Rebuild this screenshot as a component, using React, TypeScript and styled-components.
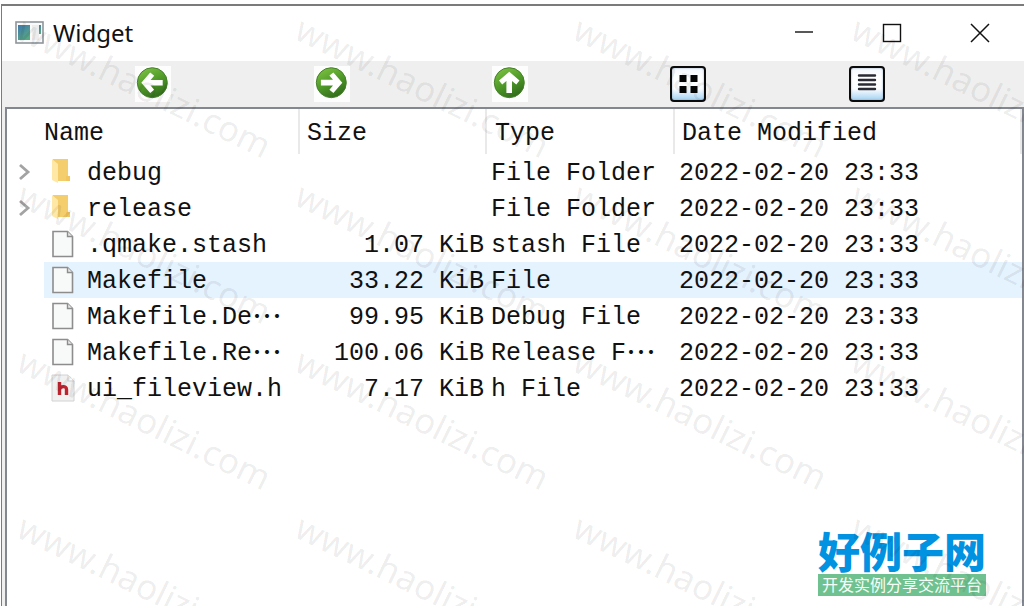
import React from "react";
import styled, { createGlobalStyle, css } from "styled-components";

const GlobalStyle = createGlobalStyle`
  *, *::before, *::after { box-sizing: border-box; }
  html, body, #root { height: 100%; }
  body {
    margin: 0;
    background: #ffffff;
    overflow: hidden;
  }
`;

const Page = styled.div`
  position: relative;
  display: flex;
  min-height: 100vh;
  padding: 4px 0 0 1px;
  overflow: hidden;
`;

const Window = styled.main`
  flex: 1;
  min-width: 0;
  display: flex;
  flex-direction: column;
  border: solid #7b7b7b;
  border-width: 2px 0 0 1px;
  background: #efefef;
`;

const TitleBar = styled.header`
  display: flex;
  align-items: center;
  height: 55px;
  padding: 0 0 2px 13px;
  background: #ffffff;
`;

const Title = styled.h1`
  flex: 1;
  margin: 0;
  padding-left: 9px;
  font: 400 24px/32px "Noto Sans", "Open Sans", sans-serif;
  color: #111111;
`;

const CaptionButton = styled.button`
  display: flex;
  align-items: center;
  justify-content: center;
  width: 88px;
  height: 100%;
  padding: 0;
  border: 0;
  background: transparent;
`;

const ToolBar = styled.nav`
  display: grid;
  grid-template-columns: repeat(5, 1fr);
  align-items: center;
  justify-items: center;
  height: 46px;
  padding: 0 68px 0 62px;
`;

const ToolButton = styled.button<{ $framed?: boolean }>`
  display: flex;
  align-items: center;
  justify-content: center;
  width: 36px;
  height: 36px;
  padding: 0;
  border: 0;
  background: #fdfdfd;
  ${(p) =>
    p.$framed &&
    css`
      border: 2px solid #0b0b0b;
      border-radius: 4px;
      background: linear-gradient(#f4f7fb, #ffffff 30%, #fbfdff 65%, #a5d3f3);
      box-shadow: inset 0 0 2px #8aa4bb;
    `}
`;

const FileView = styled.section`
  flex: 1;
  margin-left: 3px;
  border: solid #828790;
  border-width: 2px 2px 0 2px;
  background: #ffffff;
`;

const Tree = styled.table`
  width: 100%;
  table-layout: fixed;
  border-collapse: separate;
  border-spacing: 0;
  font: 400 25px/32px "Liberation Mono", "Noto Sans CJK SC", monospace;
  color: #111111;
`;

const Column = styled.col<{ $width?: number }>`
  width: ${(p) => (p.$width ? `${p.$width}px` : "auto")};
`;

const HeadCell = styled.th<{ $indent: number }>`
  height: 45px;
  padding: 5px 0 0 ${(p) => p.$indent}px;
  border-right: 2px solid #e9e9e9;
  font-weight: 400;
  text-align: left;
  white-space: nowrap;
`;

const Cell = styled.td<{ $right?: boolean }>`
  height: 36px;
  padding: 4px 3px 0 4px;
  text-align: ${(p) => (p.$right ? "right" : "left")};
  white-space: nowrap;
`;

const NameCell = styled(Cell)`
  padding: 0;
`;

const NameBox = styled.div`
  display: flex;
  height: 36px;
`;

const Branch = styled.span`
  display: flex;
  align-items: center;
  width: 37px;
  padding-left: 11px;
`;

const Expander = styled.button`
  display: flex;
  padding: 0;
  border: 0;
  background: transparent;
`;

const Item = styled.span`
  display: flex;
  flex: 1;
  align-items: center;
  gap: 12px;
  padding-left: 7px;
`;

const FileName = styled.span`
  padding-top: 4px;
`;

const Row = styled.tr<{ $selected?: boolean }>`
  ${(p) =>
    p.$selected &&
    css`
      ${Item}, ${Cell}:not(${NameCell}) {
        background: #e5f3ff;
      }
    `}
`;

const Ellipsis = styled.span`
  display: inline-block;
  height: 32px;
  vertical-align: top;
  font: 400 30px/24px "Noto Sans CJK SC", sans-serif;
`;

const Watermarks = styled.div`
  position: absolute;
  inset: 0;
  display: grid;
  grid-template-columns: repeat(4, 278px);
  grid-auto-rows: 166px;
  padding: 5px 0 0 15px;
  overflow: hidden;
  pointer-events: none;
  user-select: none;
`;

const Watermark = styled.span`
  font: 400 35px/40px "Noto Sans", "Open Sans", sans-serif;
  color: rgba(0, 0, 0, 0.08);
  white-space: nowrap;
  transform: rotate(26deg);
  transform-origin: 0 32px;
`;

const SiteLogo = styled.aside`
  position: absolute;
  right: 38px;
  bottom: 10px;
  display: flex;
  flex-direction: column;
  width: 168px;
`;

const SiteName = styled.strong`
  font: 900 42px/48px "Noto Sans CJK SC", sans-serif;
  color: #0292e2;
  white-space: nowrap;
`;

const SiteTagline = styled.span`
  height: 22px;
  padding: 0 4px;
  background: #70c190;
  font: 400 16px/20px "Noto Sans CJK SC", sans-serif;
  color: #f4fff8;
  text-align: center;
  white-space: nowrap;
`;

type Kind = "folder" | "file" | "header";

interface Entry {
  name: string;
  size: string;
  type: string;
  kind: Kind;
  nameCut?: boolean;
  typeCut?: boolean;
  selected?: boolean;
}

const modified = "2022-02-20 23:33";

const entries: Entry[] = [
  { name: "debug", size: "", type: "File Folder", kind: "folder" },
  { name: "release", size: "", type: "File Folder", kind: "folder" },
  { name: ".qmake.stash", size: "1.07 KiB", type: "stash File", kind: "file" },
  { name: "Makefile", size: "33.22 KiB", type: "File", kind: "file", selected: true },
  { name: "Makefile.De", size: "99.95 KiB", type: "Debug File", kind: "file", nameCut: true },
  { name: "Makefile.Re", size: "100.06 KiB", type: "Release F", kind: "file", nameCut: true, typeCut: true },
  { name: "ui_fileview.h", size: "7.17 KiB", type: "h File", kind: "header" },
];

const AppIcon = () => (
  <svg width="29" height="23" viewBox="0 0 29 23" aria-hidden="true">
    <defs>
      <linearGradient id="pane" x1="0" y1="0" x2="0.6" y2="1">
        <stop offset="0" stopColor="#3f78ad" />
        <stop offset="1" stopColor="#58a884" />
      </linearGradient>
    </defs>
    <rect x="1" y="1" width="27" height="21" fill="#fafafa" stroke="#8f959c" strokeWidth="1.6" />
    <rect x="3" y="4" width="12" height="15" fill="url(#pane)" />
    <rect x="17" y="4" width="7" height="15" fill="#ededed" />
    <rect x="24" y="4" width="2" height="9" fill="url(#pane)" />
  </svg>
);

const ArrowIcon = ({ turn }: { turn: number }) => (
  <svg width="36" height="36" viewBox="0 0 36 36" aria-hidden="true">
    <defs>
      <linearGradient id={`green${turn}`} x1="0.2" y1="0" x2="0.7" y2="1">
        <stop offset="0" stopColor="#7cc142" />
        <stop offset="0.5" stopColor="#4f9a28" />
        <stop offset="1" stopColor="#30691a" />
      </linearGradient>
    </defs>
    <circle cx="17.3" cy="16.7" r="15" fill={`url(#green${turn})`} stroke="#47802d" strokeWidth="1" />
    <g transform={`rotate(${turn} 17.3 16.7)`}>
      <path
        d="M6.3 16.7 L15.2 6.5 L19.2 9.7 L15.6 14 H27.7 V19.6 H15.6 L19.2 23.8 L15.2 27 Z"
        fill="#ffffff"
      />
    </g>
  </svg>
);

const GridIcon = () => (
  <svg width="32" height="32" viewBox="0 0 32 32" aria-hidden="true">
    <path d="M7.5 7h7v7h-7zM18.5 7h7v7h-7zM7.5 18h7v7h-7zM18.5 18h7v7h-7z" fill="#050505" />
  </svg>
);

const ListIcon = () => (
  <svg width="32" height="32" viewBox="0 0 32 32" aria-hidden="true">
    <path
      d="M8 7.5H24M8 12H24M8 16.5H24M8 21H24"
      stroke="#2b2b35"
      strokeWidth="2.4"
      strokeLinecap="round"
    />
  </svg>
);

const FolderIcon = () => (
  <svg width="24" height="28" viewBox="0 0 24 28" aria-hidden="true">
    <path d="M2 1H17V19H19V23H6L2 22Z" fill="#f4cd6c" />
    <path d="M15 18H19V23H15Z" fill="#f1c661" />
    <path d="M1 1L7 6V25L1 22Z" fill="#ffe8a6" />
  </svg>
);

const FileIcon = () => (
  <svg width="24" height="28" viewBox="0 0 24 28" aria-hidden="true">
    <path d="M2 1.5H16.5L21.5 6.5V26.5H2Z" fill="#f8f9f9" stroke="#8d8d8d" strokeWidth="1.6" />
    <path d="M16.5 1.5V6.5H21.5" fill="#e8e8e8" stroke="#8d8d8d" strokeWidth="1.4" />
  </svg>
);

const HeaderFileIcon = () => (
  <svg width="24" height="28" viewBox="0 0 24 28" aria-hidden="true">
    <path d="M1 1H17L23 7V27H1Z" fill="#f1f1f1" stroke="#d2d2d2" />
    <path d="M17 1V7H23" fill="#fafafa" stroke="#cfcfcf" />
    <path
      d="M8.5 8V21M8.5 15.5C9.5 11.8 15.5 11.5 15.5 15.5V21"
      fill="none"
      stroke="#bd2430"
      strokeWidth="3.4"
    />
  </svg>
);

const icons: Record<Kind, () => React.JSX.Element> = {
  folder: FolderIcon,
  file: FileIcon,
  header: HeaderFileIcon,
};

export default function App() {
  return (
    <Page>
      <GlobalStyle />
      <Window>
        <TitleBar>
          <AppIcon />
          <Title>Widget</Title>
          <CaptionButton aria-label="Minimize">
            <svg width="20" height="20" viewBox="0 0 20 20">
              <path d="M1 9H19" stroke="#111" strokeWidth="1.4" />
            </svg>
          </CaptionButton>
          <CaptionButton aria-label="Maximize">
            <svg width="20" height="20" viewBox="0 0 20 20">
              <rect x="1.5" y="1.5" width="17" height="17" fill="none" stroke="#111" strokeWidth="1.4" />
            </svg>
          </CaptionButton>
          <CaptionButton aria-label="Close">
            <svg width="20" height="20" viewBox="0 0 20 20">
              <path d="M1 1L19 19M19 1L1 19" stroke="#111" strokeWidth="1.5" />
            </svg>
          </CaptionButton>
        </TitleBar>
        <ToolBar aria-label="Navigation">
          <ToolButton aria-label="Back"><ArrowIcon turn={0} /></ToolButton>
          <ToolButton aria-label="Forward"><ArrowIcon turn={180} /></ToolButton>
          <ToolButton aria-label="Up"><ArrowIcon turn={90} /></ToolButton>
          <ToolButton $framed aria-label="Icon view"><GridIcon /></ToolButton>
          <ToolButton $framed aria-label="Detail view"><ListIcon /></ToolButton>
        </ToolBar>
        <FileView>
          <Tree>
            <colgroup>
              <Column $width={293} />
              <Column $width={187} />
              <Column $width={188} />
              <Column />
            </colgroup>
            <thead>
              <tr>
                <HeadCell $indent={37}>Name</HeadCell>
                <HeadCell $indent={7}>Size</HeadCell>
                <HeadCell $indent={8}>Type</HeadCell>
                <HeadCell $indent={7}>Date Modified</HeadCell>
              </tr>
            </thead>
            <tbody>
              {entries.map((entry) => {
                const Icon = icons[entry.kind];
                return (
                  <Row key={entry.name} $selected={entry.selected}>
                    <NameCell>
                      <NameBox>
                        <Branch>
                          {entry.kind === "folder" && (
                            <Expander aria-label={`Expand ${entry.name}`}>
                              <svg width="14" height="18" viewBox="0 0 14 18">
                                <path d="M2 2L10 9L2 16" fill="none" stroke="#a3a3a3" strokeWidth="2.8" />
                              </svg>
                            </Expander>
                          )}
                        </Branch>
                        <Item>
                          <Icon />
                          <FileName>
                            {entry.name}
                            {entry.nameCut && <Ellipsis lang="zh-CN">…</Ellipsis>}
                          </FileName>
                        </Item>
                      </NameBox>
                    </NameCell>
                    <Cell $right>{entry.size}</Cell>
                    <Cell>
                      {entry.type}
                      {entry.typeCut && <Ellipsis lang="zh-CN">…</Ellipsis>}
                    </Cell>
                    <Cell>{modified}</Cell>
                  </Row>
                );
              })}
            </tbody>
          </Tree>
        </FileView>
      </Window>
      <SiteLogo lang="zh-CN">
        <SiteName>好例子网</SiteName>
        <SiteTagline>开发实例分享交流平台</SiteTagline>
      </SiteLogo>
      <Watermarks aria-hidden="true">
        {Array.from({ length: 16 }, (_, i) => (
          <Watermark key={i}>www.haolizi.com</Watermark>
        ))}
      </Watermarks>
    </Page>
  );
}
